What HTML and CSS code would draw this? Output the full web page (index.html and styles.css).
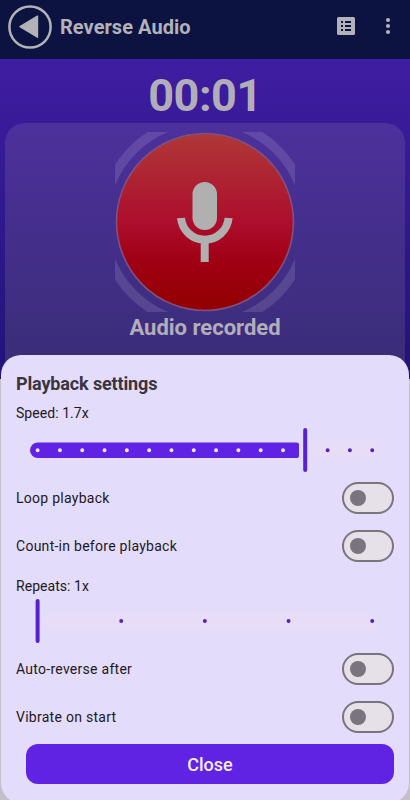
FILE: index.html
```html
<!DOCTYPE html>
<html lang="en">
<head>
<meta charset="utf-8">
<title>Reverse Audio</title>
<link rel="stylesheet" href="styles.css">
</head>
<body>
<div class="app">
  <header class="bar">
    <svg class="back" width="44" height="44" viewBox="0 0 44 44"><circle cx="22" cy="22" r="20.600" fill="none" stroke="#b3b2b8" stroke-width="2.500"/><path d="M12 21.700 29.500 11.200V32.200Z" fill="#b3b2b8" stroke="#b3b2b8" stroke-width="1.400" stroke-linejoin="round"/></svg>
    <h1 class="bar-title">Reverse Audio</h1>
    <svg class="list" width="24" height="24" viewBox="0 0 24 24"><path fill="#b3b2b8" fill-rule="evenodd" d="M4.500 3h15A1.500 1.500 0 0 1 21 4.500v15a1.500 1.500 0 0 1-1.500 1.500h-15A1.500 1.500 0 0 1 3 19.500v-15A1.500 1.500 0 0 1 4.500 3ZM7 7v2h2V7ZM11 7v2h6V7ZM7 11v2h2v-2ZM11 11v2h6v-2ZM7 15v2h2v-2ZM11 15v2h6v-2Z"/></svg>
    <svg class="more" width="24" height="24" viewBox="0 0 24 24" fill="#b3b2b8"><circle cx="12" cy="6" r="2.100"/><circle cx="12" cy="12" r="2.100"/><circle cx="12" cy="18" r="2.100"/></svg>
  </header>
  <main class="stage">
    <div class="timer">00:01</div>
    <section class="card">
      <svg class="mic" width="180" height="180" viewBox="0 0 180 180">
        <defs><linearGradient id="red" x1="0" y1="0" x2="0" y2="1"><stop offset="0" stop-color="#af3838"/><stop offset=".5" stop-color="#ad0e2c"/><stop offset=".72" stop-color="#a00014"/><stop offset="1" stop-color="#920000"/></linearGradient></defs>
        <circle cx="90" cy="90" r="102" fill="none" stroke="#fff" stroke-opacity=".12" stroke-width="9.500"/>
        <circle cx="90" cy="90" r="88.500" fill="url(#red)" stroke="#805080" stroke-width="1.600"/>
        <rect x="77.500" y="50" width="24.500" height="48" rx="12.250" fill="#b0b0b0"/>
        <path d="M66 86a23.900 23.900 0 0 0 47.600 0M89.700 108v22" fill="none" stroke="#b0b0b0" stroke-width="8"/>
      </svg>
      <div class="status">Audio recorded</div>
    </section>
  </main>
  <section class="sheet">
    <h2 class="sheet-title">Playback settings</h2>
    <div class="value">Speed: 1.7x</div>
    <svg class="slider speed" width="352" height="44" viewBox="0 0 352 44">
      <path d="M282 14.500h62a6 7.800 0 0 1 0 15.500h-62z" fill="#e8ddf6"/>
      <path d="M8.800 14.400H268a2 2 0 0 1 2 2V28a2 2 0 0 1-2 2H8.800a7.800 7.800 0 0 1 0-15.600Z" fill="#6123e3"/>
      <path d="M8.600 22.200H255" stroke="#eee5ff" stroke-width="4" stroke-linecap="round" stroke-dasharray="0 22.310"/>
      <path d="M298.600 22.200H344" stroke="#5421c5" stroke-width="4" stroke-linecap="round" stroke-dasharray="0 22.310"/>
      <rect x="274.200" y="0" width="4" height="44" rx="2" fill="#5821cd"/>
    </svg>
    <div class="row"><span>Loop playback</span><i class="switch"></i></div>
    <div class="row"><span>Count-in before playback</span><i class="switch"></i></div>
    <div class="value repeats">Repeats: 1x</div>
    <svg class="slider" width="352" height="44" viewBox="0 0 352 44">
      <path d="M15 14.500h329a6 7.800 0 0 1 0 15.500H15z" fill="#e8ddf6"/>
      <path d="M92.200 22H344" stroke="#5421c5" stroke-width="4" stroke-linecap="round" stroke-dasharray="0 83.670"/>
      <rect x="6.600" y="0" width="4" height="44" rx="2" fill="#5821cd"/>
    </svg>
    <div class="row after"><span>Auto-reverse after</span><i class="switch"></i></div>
    <div class="row"><span>Vibrate on start</span><i class="switch"></i></div>
    <button class="close">Close</button>
  </section>
</div>
</body>
</html>
```
FILE: styles.css
```css
* { box-sizing: border-box; }
body { margin: 0; font-family: Roboto, "Liberation Sans", sans-serif; }
.app {
  position: relative;
  width: 410px;
  height: 800px;
  overflow: hidden;
  background: #c4bfca;
}
.bar {
  display: flex;
  align-items: center;
  height: 59px;
  padding: 0 10px 7px 8px;
  background: #0c1340;
}
.back { margin-top: 1px; }
.bar-title {
  flex: 1;
  margin: 2px 0 0 8px;
  color: #b3b2b8;
  font-size: 20px;
  font-weight: 700;
  letter-spacing: .05px;
  line-height: 24px;
}
.list { margin-right: 18px; }
.stage {
  height: 320px;
  padding: 10px 5px 0;
  background: linear-gradient(#3f1da1, #22147c 300px);
}
.timer {
  height: 54px;
  color: #b1aeb9;
  font-size: 45px;
  font-weight: 700;
  letter-spacing: -.5px;
  line-height: 54px;
  text-align: center;
}
.card {
  display: flex;
  flex-direction: column;
  align-items: center;
  height: 256px;
  padding-top: 9px;
  border-radius: 20px 20px 0 0;
  background: linear-gradient(#4d309c, #3a2d78 240px);
}
.status {
  margin-top: 2px;
  color: #b1aeb9;
  font-size: 22px;
  font-weight: 700;
  line-height: 28px;
}
.sheet {
  position: absolute;
  top: 355px;
  left: 1px;
  width: 408px;
  height: 448px;
  padding: 15px 15px 0;
  border-radius: 20px;
  background: #e4dcfb;
  color: #1c1826;
}
.sheet-title {
  margin: 0;
  color: #39343f;
  font-size: 18px;
  font-weight: 700;
  letter-spacing: -.14px;
  line-height: 28px;
}
.value {
  height: 20px;
  margin-top: 5px;
  font-size: 14px;
  letter-spacing: .05px;
  line-height: 20px;
}
.slider { display: block; margin-left: 13px; }
.speed { margin-top: 5px; margin-bottom: 2px; }
.row {
  display: flex;
  align-items: center;
  justify-content: space-between;
  height: 48px;
  font-size: 14px;
  letter-spacing: .27px;
}
.switch {
  width: 52px;
  height: 32px;
  padding: 6px;
  border: 2px solid #79747e;
  border-radius: 16px;
  background: #e6e0e9;
}
.switch::before {
  content: "";
  display: block;
  width: 16px;
  height: 16px;
  border-radius: 50%;
  background: #79747e;
}
.repeats { margin-top: 6px; margin-bottom: 3px; }
.after { margin-top: 2px; }
.close {
  display: block;
  width: 368px;
  height: 40px;
  margin: 3px 0 0 10px;
  border: 0;
  border-radius: 12px;
  background: #6123e3;
  color: #f4edff;
  font: 500 18px/40px Roboto, "Liberation Sans", sans-serif;
}
```
